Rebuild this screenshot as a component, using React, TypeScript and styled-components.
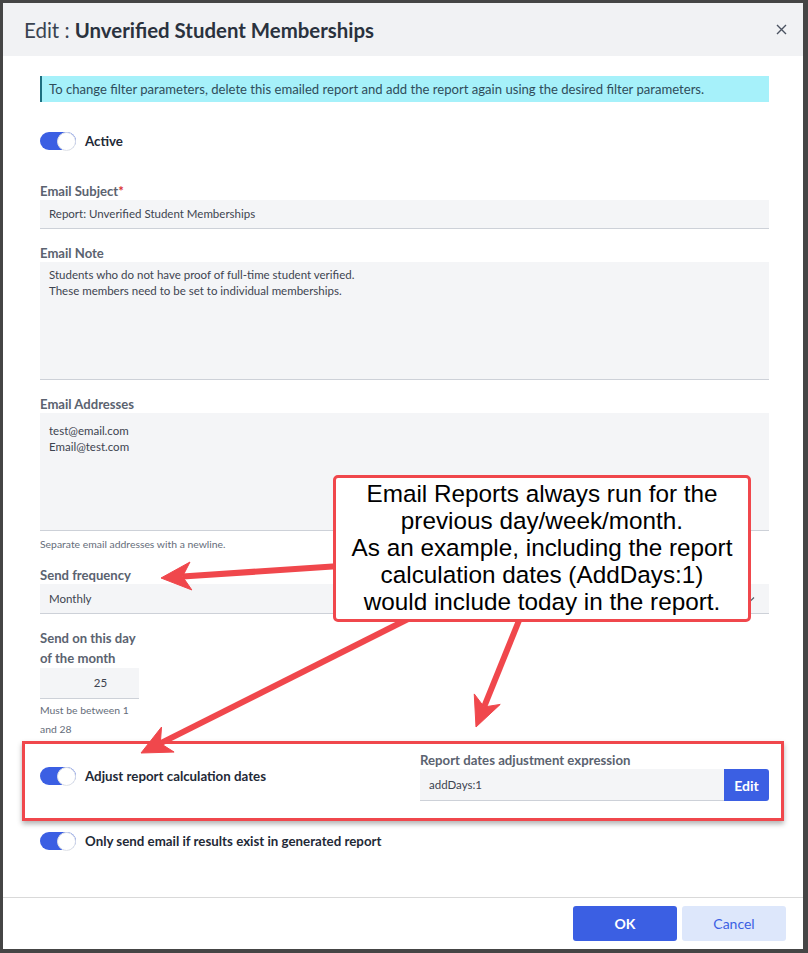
import React from "react";
import styled, { createGlobalStyle } from "styled-components";

const GlobalStyle = createGlobalStyle`
  html, body { margin: 0; padding: 0; background: #454545; }
  body { font-family: Lato, "Noto Sans", sans-serif; -webkit-font-smoothing: antialiased; }
  * { box-sizing: border-box; }
`;

const Page = styled.div`
  position: relative;
  width: 808px;
  height: 953px;
  padding: 3px 5px 4px 3px;
  background: #454545;
`;

const Dialog = styled.div`
  height: 946px;
  background: #fff;
  display: flex;
  flex-direction: column;
`;

const Header = styled.header`
  height: 53px;
  flex: none;
  background: #f1f2f4;
  display: flex;
  align-items: center;
  justify-content: space-between;
  padding: 0 16px 0 21px;
`;

const Title = styled.h1`
  margin: 0;
  font-size: 20.5px;
  font-weight: 400;
  color: #3a4350;
  & b { font-weight: 700; color: #2a323e; font-size: 20.4px; }
`;

const CloseBtn = styled.button`
  border: 0;
  background: transparent;
  padding: 0;
  width: 12px;
  height: 12px;
  display: flex;
  align-items: center;
  justify-content: center;
  color: #4b5361;
`;

const Body = styled.div`
  flex: 1;
  padding: 20px 34px 0 37px;
  display: flex;
  flex-direction: column;
`;

const InfoBar = styled.div`
  height: 26px;
  background: #a6f1fa;
  border-left: 2px solid #1d6f80;
  padding-left: 7px;
  display: flex;
  align-items: center;
  font-size: 13.1px;
  color: #2f4d5b;
`;

const ToggleRow = styled.div<{ $mt: number }>`
  margin-top: ${(p) => p.$mt}px;
  display: flex;
  align-items: center;
  gap: 9px;
`;

const Track = styled.span`
  width: 36px;
  height: 18px;
  border-radius: 9px;
  background: #3b5fe3;
  display: flex;
  justify-content: flex-end;
  align-items: center;
  flex: none;
`;

const Knob = styled.span`
  width: 19px;
  height: 19px;
  border-radius: 50%;
  background: #fff;
  border: 1px solid #dfe2e8;
`;

const ToggleLabel = styled.span`
  font-size: 13.3px;
  font-weight: 700;
  color: #1f2a37;
  line-height: 18px;
`;

const Label = styled.label<{ $mt: number; $narrow?: boolean }>`
  display: block;
  margin-top: ${(p) => p.$mt}px;
  font-size: 13.1px;
  font-weight: 700;
  color: #5b6370;
  line-height: ${(p) => (p.$narrow ? 20 : 18)}px;
  width: ${(p) => (p.$narrow ? "100px" : "auto")};
  & em { font-style: normal; color: #d9302f; }
`;

const Field = styled.div<{ $h: number; $pt?: number; $w?: number; $center?: boolean }>`
  height: ${(p) => p.$h}px;
  width: ${(p) => (p.$w ? `${p.$w}px` : "auto")};
  background: #f4f5f7;
  border-bottom: 1px solid #cdd1d8;
  padding: ${(p) => (p.$pt !== undefined ? `${p.$pt}px 9px 0 9px` : "0 9px")};
  display: flex;
  flex-direction: column;
  justify-content: ${(p) => (p.$pt !== undefined ? "flex-start" : "center")};
  align-items: ${(p) => (p.$center ? "center" : "stretch")};
  font-size: 11.5px;
  line-height: 16px;
  color: #3d4450;
`;

const SelectField = styled(Field)`
  flex-direction: row;
  justify-content: space-between;
  align-items: center;
  padding-right: 14px;
`;

const Help = styled.div<{ $lh: number; $w?: number }>`
  margin-top: ${(p) => (p.$lh > 15 ? 2 : 6)}px;
  font-size: 10.4px;
  color: #656d7a;
  line-height: ${(p) => p.$lh}px;
  width: ${(p) => (p.$w ? `${p.$w}px` : "auto")};
`;

const AdjustRow = styled.div`
  position: relative;
  margin-top: 12px;
  display: grid;
  grid-template-columns: 1fr 349px;
  align-items: center;
  &::after {
    content: "";
    position: absolute;
    left: -18px;
    right: -15px;
    top: -10px;
    bottom: -20px;
    border: 3px solid #f0474c;
    box-shadow: 0 3px 5px rgba(0, 0, 0, 0.3);
    pointer-events: none;
  }
`;

const ExprCol = styled.div`
  display: flex;
  flex-direction: column;
`;

const ExprLabel = styled.div`
  font-size: 13.2px;
  font-weight: 700;
  color: #5b6370;
  line-height: 18px;
`;

const InputGroup = styled.div`
  display: flex;
  height: 32px;
`;

const ExprInput = styled.div`
  flex: 1;
  background: #f4f5f7;
  border-bottom: 1px solid #cdd1d8;
  display: flex;
  align-items: center;
  padding: 0 0 0 9px;
  font-size: 11.5px;
  color: #3d4450;
`;

const EditBtn = styled.button`
  width: 45px;
  border: 0;
  border-radius: 0 3px 3px 0;
  background: #3b5fe3;
  color: #fff;
  font-family: inherit;
  font-size: 14px;
  font-weight: 700;
`;

const Footer = styled.footer`
  flex: none;
  height: 52px;
  border-top: 1px solid #d9d9d9;
  display: flex;
  justify-content: flex-end;
  align-items: center;
  gap: 5px;
  padding-right: 17px;
`;

const Btn = styled.button<{ $primary?: boolean }>`
  width: 104px;
  height: 35px;
  border: 0;
  border-radius: 3px;
  font-family: inherit;
  font-size: 14px;
  font-weight: ${(p) => (p.$primary ? 700 : 400)};
  background: ${(p) => (p.$primary ? "#3b5fe3" : "#dde7fb")};
  color: ${(p) => (p.$primary ? "#fff" : "#3b5fe3")};
`;

const Overlay = styled.svg`
  position: absolute;
  left: 0;
  top: 0;
  pointer-events: none;
`;

const Callout = styled.div`
  position: absolute;
  left: 333px;
  top: 475px;
  width: 418px;
  height: 147px;
  background: #fff;
  border: 3px solid #f0474c;
  border-radius: 5px;
  padding-top: 2px;
  font-family: "Liberation Sans", Arial, sans-serif;
  font-size: 24.3px;
  line-height: 27px;
  text-align: center;
  color: #000;
`;

const Toggle = ({ label, mt }: { label: string; mt: number }) => (
  <ToggleRow $mt={mt}>
    <Track>
      <Knob />
    </Track>
    <ToggleLabel>{label}</ToggleLabel>
  </ToggleRow>
);

function arrow(sx: number, sy: number, tx: number, ty: number) {
  const dx = tx - sx;
  const dy = ty - sy;
  const len = Math.hypot(dx, dy);
  const ux = dx / len;
  const uy = dy / len;
  const nx = -uy;
  const ny = ux;
  const L = 30;
  const W = 14;
  const bx = tx - ux * L;
  const by = ty - uy * L;
  const notchX = tx - ux * L * 0.72;
  const notchY = ty - uy * L * 0.72;
  const pts = [
    [tx, ty],
    [bx + nx * W, by + ny * W],
    [notchX, notchY],
    [bx - nx * W, by - ny * W],
  ]
    .map((p) => p.join(","))
    .join(" ");
  return { line: { x1: sx, y1: sy, x2: notchX, y2: notchY }, pts };
}

const arrows = [
  arrow(340, 566, 161, 578),
  arrow(410, 618, 141, 753),
  arrow(520, 618, 476, 727),
];

export default function App() {
  return (
    <>
      <GlobalStyle />
      <Page>
        <Dialog>
          <Header>
            <Title>
              Edit : <b>Unverified Student Memberships</b>
            </Title>
            <CloseBtn aria-label="Close">
              <svg width="11" height="11" viewBox="0 0 11 11">
                <path d="M1 1L10 10M10 1L1 10" stroke="currentColor" strokeWidth="1.4" />
              </svg>
            </CloseBtn>
          </Header>
          <Body>
            <InfoBar>
              To change filter parameters, delete this emailed report and add the report again using the desired filter parameters.
            </InfoBar>
            <Toggle label="Active" mt={30} />

            <Label $mt={32}>
              Email Subject<em>*</em>
            </Label>
            <Field $h={29}>Report: Unverified Student Memberships</Field>

            <Label $mt={15}>Email Note</Label>
            <Field $h={118} $pt={5}>
              <div>Students who do not have proof of full-time student verified.</div>
              <div>These members need to be set to individual memberships.</div>
            </Field>

            <Label $mt={15}>Email Addresses</Label>
            <Field $h={118} $pt={10}>
              <div>test@email.com</div>
              <div>Email@test.com</div>
            </Field>
            <Help $lh={14}>Separate email addresses with a newline.</Help>

            <Label $mt={15}>Send frequency</Label>
            <SelectField $h={30}>
              <span>Monthly</span>
              <svg width="8" height="6" viewBox="0 0 8 6">
                <path d="M1 1.5L4 4.5L7 1.5" stroke="#555d6a" strokeWidth="1.2" fill="none" />
              </svg>
            </SelectField>

            <Label $mt={14} $narrow>
              Send on this day of the month
            </Label>
            <Field $h={31} $w={99} $center>
              <span style={{ paddingLeft: 22 }}>25</span>
            </Field>
            <Help $lh={19} $w={99}>
              Must be between 1 and 28
            </Help>

            <AdjustRow>
              <ToggleRow $mt={0}>
                <Track>
                  <Knob />
                </Track>
                <ToggleLabel>Adjust report calculation dates</ToggleLabel>
              </ToggleRow>
              <ExprCol>
                <ExprLabel>Report dates adjustment expression</ExprLabel>
                <InputGroup>
                  <ExprInput>addDays:1</ExprInput>
                  <EditBtn>Edit</EditBtn>
                </InputGroup>
              </ExprCol>
            </AdjustRow>

            <Toggle label="Only send email if results exist in generated report" mt={31} />
          </Body>
          <Footer>
            <Btn $primary>OK</Btn>
            <Btn>Cancel</Btn>
          </Footer>
        </Dialog>

        <Overlay width="808" height="953" viewBox="0 0 808 953">
          {arrows.map((a, i) => (
            <g key={i} fill="#f0474c" stroke="#f0474c">
              <line {...a.line} strokeWidth="6" />
              <polygon points={a.pts} strokeWidth="1" strokeLinejoin="round" />
            </g>
          ))}
        </Overlay>
        <Callout>
          Email Reports always run for the
          <br />
          previous day/week/month.
          <br />
          As an example, including the report
          <br />
          calculation dates (AddDays:1)
          <br />
          would include today in the report.
        </Callout>
      </Page>
    </>
  );
}
